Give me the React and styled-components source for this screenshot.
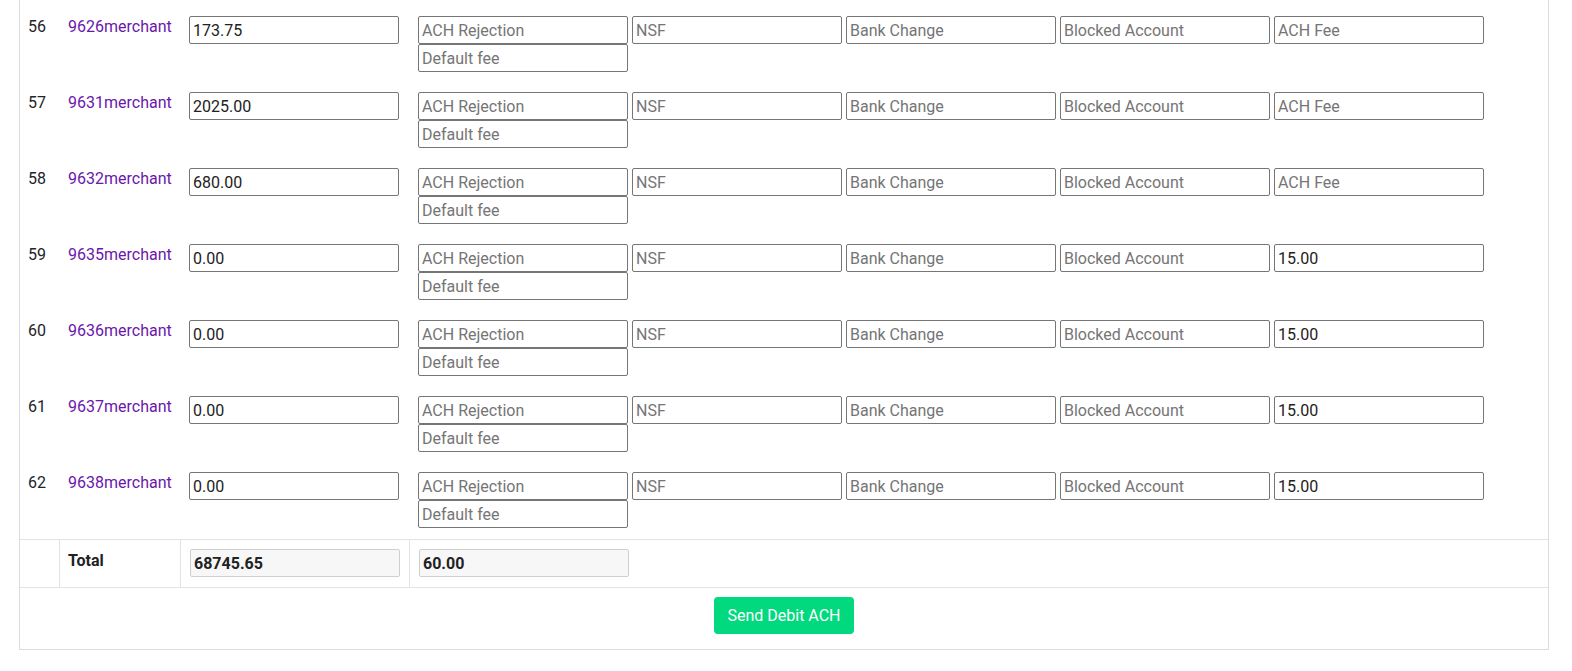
import styled, { createGlobalStyle } from "styled-components";

const GlobalStyle = createGlobalStyle`
  html, body {
    margin: 0;
    padding: 0;
    background: #fff;
  }
  body {
    font-family: Roboto, "Noto Sans", "Liberation Sans", sans-serif;
    font-size: 16px;
    line-height: 1.5;
    color: #212529;
  }
  * {
    box-sizing: border-box;
  }
`;

const rows = [
  { no: 56, merchant: "9626merchant", amount: "173.75", fee: "" },
  { no: 57, merchant: "9631merchant", amount: "2025.00", fee: "" },
  { no: 58, merchant: "9632merchant", amount: "680.00", fee: "" },
  { no: 59, merchant: "9635merchant", amount: "0.00", fee: "15.00" },
  { no: 60, merchant: "9636merchant", amount: "0.00", fee: "15.00" },
  { no: 61, merchant: "9637merchant", amount: "0.00", fee: "15.00" },
  { no: 62, merchant: "9638merchant", amount: "0.00", fee: "15.00" },
];

const App = () => {
  return (
    <>
      <GlobalStyle />
      <Page>
        <Panel>
          <Body>
            {rows.map((row) => (
              <DataRow key={row.no}>
                <TextCell>{row.no}</TextCell>
                <TextCell>
                  <MerchantLink href="#">{row.merchant}</MerchantLink>
                </TextCell>
                <InputCell>
                  <Field defaultValue={row.amount} />
                </InputCell>
                <InputCell>
                  <FeeGroup>
                    <Field placeholder="ACH Rejection" />
                    <Field placeholder="NSF" />
                    <Field placeholder="Bank Change" />
                    <Field placeholder="Blocked Account" />
                    <Field placeholder="ACH Fee" defaultValue={row.fee} />
                    <Field placeholder="Default fee" />
                  </FeeGroup>
                </InputCell>
              </DataRow>
            ))}
          </Body>
          <TotalRow>
            <TotalCell />
            <TotalCell $bordered>
              <TotalLabel>Total</TotalLabel>
            </TotalCell>
            <TotalCell $bordered>
              <TotalField readOnly value="68745.65" />
            </TotalCell>
            <TotalCell $bordered>
              <TotalField readOnly value="60.00" />
            </TotalCell>
          </TotalRow>
          <FooterRow>
            <SendButton type="button">Send Debit ACH</SendButton>
          </FooterRow>
        </Panel>
      </Page>
    </>
  );
};

export default App;

const Page = styled.div`
  padding: 0 23px 0 19px;
`;

const Panel = styled.div`
  border: 1px solid #dcdcdc;
  border-top: none;
  padding-top: 8px;
`;

const Body = styled.div`
  display: flex;
  flex-direction: column;
`;

const DataRow = styled.div`
  display: grid;
  grid-template-columns: 39px 121px 229px 1fr;

  &:last-child > div {
    padding-bottom: 11px;
  }
`;

const TextCell = styled.div`
  padding: 7px 8px 12px;
  border-left: 1px solid transparent;

  &:first-child {
    border-left: none;
  }
`;

const InputCell = styled.div`
  padding: 8px 8px 12px;
  border-left: 1px solid transparent;
`;

const MerchantLink = styled.a`
  color: #6a17ab;
  text-decoration: none;
`;

const FeeGroup = styled.div`
  display: flex;
  flex-wrap: wrap;
  column-gap: 4px;
  row-gap: 0;
`;

const Field = styled.input`
  width: 210px;
  height: 28px;
  padding: 1px 3px;
  border: 1px solid #767676;
  border-radius: 2px;
  font-family: Roboto, "Noto Sans", "Liberation Sans", sans-serif;
  font-size: 16px;
  color: #222;
  background: #fff;
  outline: none;

  &::placeholder {
    color: #757575;
  }
`;

const TotalRow = styled.div`
  display: grid;
  grid-template-columns: 39px 121px 229px 1fr;
  border-top: 1px solid #e3e3e3;
  border-bottom: 1px solid #e3e3e3;
`;

const TotalCell = styled.div`
  padding: 9px 8px 10px;
  border-left: 1px solid ${(p) => (p.$bordered ? "#e3e3e3" : "transparent")};

  &:first-child {
    border-left: none;
  }
`;

const TotalLabel = styled.span`
  font-weight: 700;
  color: #222;
`;

const TotalField = styled(Field)`
  margin-left: 1px;
  border-color: #cfcfcf;
  background: #f7f7f7;
  font-weight: 700;
`;

const FooterRow = styled.div`
  display: flex;
  justify-content: center;
  padding: 9px 0 15px;
`;

const SendButton = styled.button`
  height: 37px;
  padding: 0 13px;
  border: none;
  border-radius: 4px;
  background: #00d97e;
  color: #fff;
  font-family: Roboto, "Noto Sans", "Liberation Sans", sans-serif;
  font-size: 16px;
  cursor: pointer;
`;
